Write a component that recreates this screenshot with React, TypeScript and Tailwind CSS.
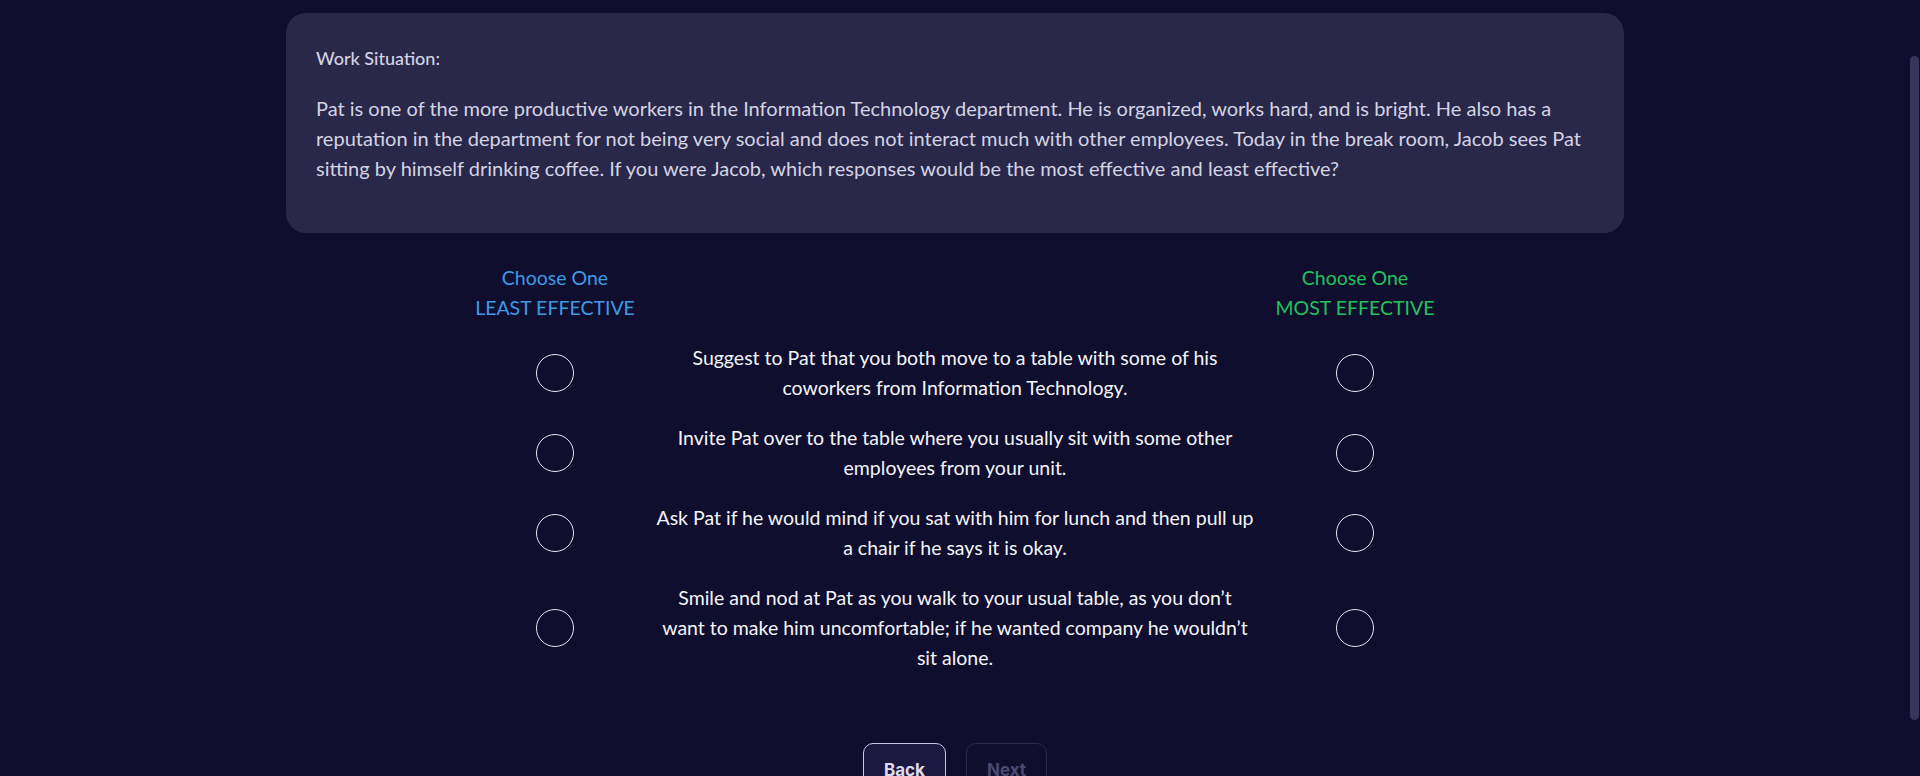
import React from "react";

const options = [
  "Suggest to Pat that you both move to a table with some of his coworkers from Information Technology.",
  "Invite Pat over to the table where you usually sit with some other employees from your unit.",
  "Ask Pat if he would mind if you sat with him for lunch and then pull up a chair if he says it is okay.",
  "Smile and nod at Pat as you walk to your usual table, as you don\u2019t want to make him uncomfortable; if he wanted company he wouldn\u2019t sit alone.",
];

function Circle() {
  return (
    <button
      type="button"
      className="h-[38px] w-[38px] rounded-full border border-[#e6e6f0] bg-transparent"
      aria-label="choose"
    />
  );
}

export default function App() {
  return (
    <div
      className="flex h-[776px] w-full overflow-hidden bg-[#100e2e]"
      style={{ fontFamily: "Lato, 'Liberation Sans', sans-serif" }}
    >
      <main className="flex flex-1 flex-col items-center pt-[13px]">
        <section className="w-[1338px] rounded-[20px] bg-[#29284a] px-[30px] pt-[30px] pb-[50px] text-[20px] leading-[30px] text-[#d4d3e3]">
          <p className="text-[18px] font-medium">Work Situation:</p>
          <p className="mt-[20px]">
            Pat is one of the more productive workers in the Information Technology department. He is organized, works
            hard, and is bright. He also has a reputation in the department for not being very social and does not
            interact much with other employees. Today in the break room, Jacob sees Pat sitting by himself drinking
            coffee. If you were Jacob, which responses would be the most effective and least effective?
          </p>
        </section>

        <div className="mt-[30px] grid grid-cols-[200px_600px_200px] gap-y-[20px] text-[19.5px] leading-[30px]">
          <div className="text-center text-[#3d9be6]">
            <div>Choose One</div>
            <div>LEAST EFFECTIVE</div>
          </div>
          <div />
          <div className="text-center text-[#22c25c]">
            <div>Choose One</div>
            <div>MOST EFFECTIVE</div>
          </div>

          {options.map((o, i) => (
            <React.Fragment key={i}>
              <div className="flex items-center justify-center">
                <Circle />
              </div>
              <p className="text-center text-[#f4f4f8]">{o}</p>
              <div className="flex items-center justify-center">
                <Circle />
              </div>
            </React.Fragment>
          ))}
        </div>

        <div
          className="mt-[70px] flex gap-[20px] text-[17px] font-bold"
          style={{ fontFamily: "Inter, 'Liberation Sans', sans-serif" }}
        >
          <button
            type="button"
            className="rounded-[10px] border border-[#c9c6e2] bg-[#1b1940] px-[20px] py-[14px] leading-[24px] text-[#dedbf0]"
          >
            Back
          </button>
          <button
            type="button"
            className="rounded-[10px] border border-[#2c2a4e] bg-transparent px-[20px] py-[14px] leading-[24px] text-[#4b4972]"
          >
            Next
          </button>
        </div>
      </main>
      <aside className="flex w-[10px] flex-col py-[56px] pr-[1px]">
        <div className="flex-1 rounded-full bg-[#37355a]" />
      </aside>
    </div>
  );
}
